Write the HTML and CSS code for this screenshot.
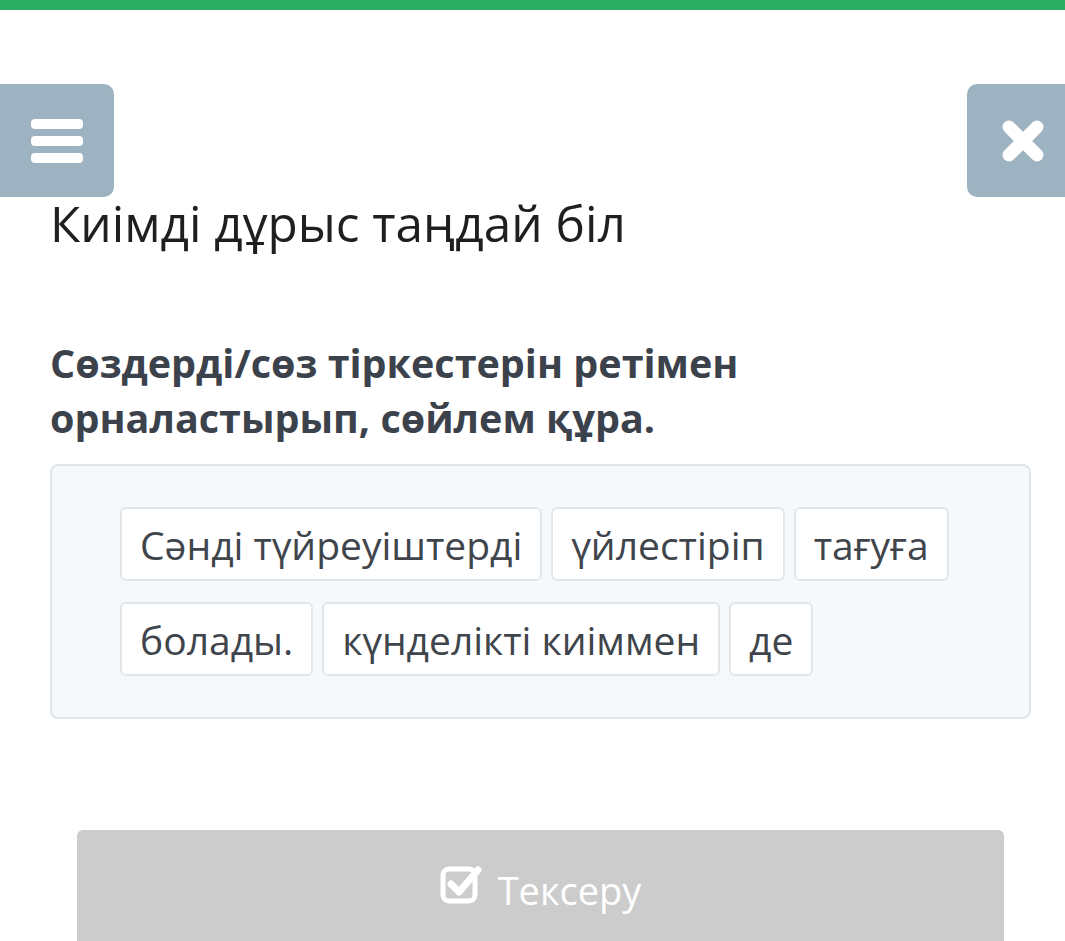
FILE: index.html
```html
<!DOCTYPE html>
<html lang="kk">
<head>
    <meta charset="UTF-8">
    <meta name="viewport" content="width=device-width, initial-scale=1.0">
    <title>Киімді дұрыс таңдай біл</title>
    <link rel="stylesheet" href="styles.css">
</head>
<body>
    <div class="top-bar"></div>
    <header class="toolbar">
        <button class="tool-btn menu-btn" aria-label="Menu">
            <svg width="52" height="44" viewBox="0 0 52 44">
                <rect x="0" y="0" width="52" height="10" rx="4" fill="#fff"/>
                <rect x="0" y="17" width="52" height="10" rx="4" fill="#fff"/>
                <rect x="0" y="34" width="52" height="10" rx="4" fill="#fff"/>
            </svg>
        </button>
        <button class="tool-btn close-btn" aria-label="Close">
            <svg width="44" height="42" viewBox="0 0 44 42">
                <path d="M8 7 L36 35 M36 7 L8 35" stroke="#fff" stroke-width="13" stroke-linecap="round"/>
            </svg>
        </button>
    </header>
    <main class="content">
        <h1 class="title">Киімді дұрыс таңдай біл</h1>
        <p class="task">Сөздерді/сөз тіркестерін ретімен орналастырып, сөйлем құра.</p>
        <div class="word-box">
            <span class="word">Сәнді түйреуіштерді</span>
            <span class="word">үйлестіріп</span>
            <span class="word">тағуға</span>
            <span class="word">болады.</span>
            <span class="word">күнделікті киіммен</span>
            <span class="word">де</span>
        </div>
        <button class="check-btn">
            <svg width="44" height="40" viewBox="0 0 44 40">
                <rect x="3" y="5" width="32" height="32" rx="6" fill="none" stroke="#fff" stroke-width="5"/>
                <path d="M11 20 L19 28 L38 6" fill="none" stroke="#fff" stroke-width="7" stroke-linecap="round" stroke-linejoin="round"/>
            </svg>
            Тексеру
        </button>
    </main>
</body>
</html>
```

FILE: styles.css
```css
body {
    margin: 0;
    background: #fff;
    font-family: "Open Sans", "Noto Sans", sans-serif;
    overflow: hidden;
}

.top-bar {
    height: 10px;
    background-color: #2bae62;
}

.toolbar {
    display: flex;
    justify-content: space-between;
    margin-top: 74px;
}

.tool-btn {
    height: 113px;
    border: none;
    background-color: #9eb3c2;
    display: flex;
    align-items: center;
    justify-content: center;
    padding: 0;
}

.menu-btn {
    width: 114px;
    border-radius: 0 10px 10px 0;
}

.close-btn {
    width: 98px;
    border-radius: 10px 0 0 10px;
    padding-left: 14px;
}

.content {
    padding: 0 34px 0 50px;
}

.title {
    margin: -6px 0 0;
    font-size: 49.5px;
    font-weight: 400;
    line-height: 64px;
    color: #1f1f1f;
}

.task {
    margin: 81px 0 0;
    font-size: 39.5px;
    font-weight: 700;
    line-height: 55px;
    color: #3c424c;
}

.word-box {
    margin-top: 18px;
    background-color: #f5f9fc;
    border: 2px solid #dfe5ea;
    border-radius: 8px;
    padding: 41px 68px;
    display: flex;
    flex-wrap: wrap;
    gap: 21px 9px;
}

.word {
    background: #fff;
    border: 2px solid #e3e6e9;
    border-radius: 6px;
    padding: 0 18px;
    height: 70px;
    display: flex;
    align-items: center;
    font-size: 39px;
    color: #40454c;
}

.check-btn {
    margin: 111px 0 0 27px;
    width: 927px;
    height: 130px;
    border: none;
    border-radius: 6px;
    background-color: #cccccc;
    color: #fff;
    font-family: "Open Sans", "Noto Sans", sans-serif;
    font-size: 38px;
    display: flex;
    align-items: flex-start;
    justify-content: center;
    gap: 14px;
    padding-top: 34px;
}
```
